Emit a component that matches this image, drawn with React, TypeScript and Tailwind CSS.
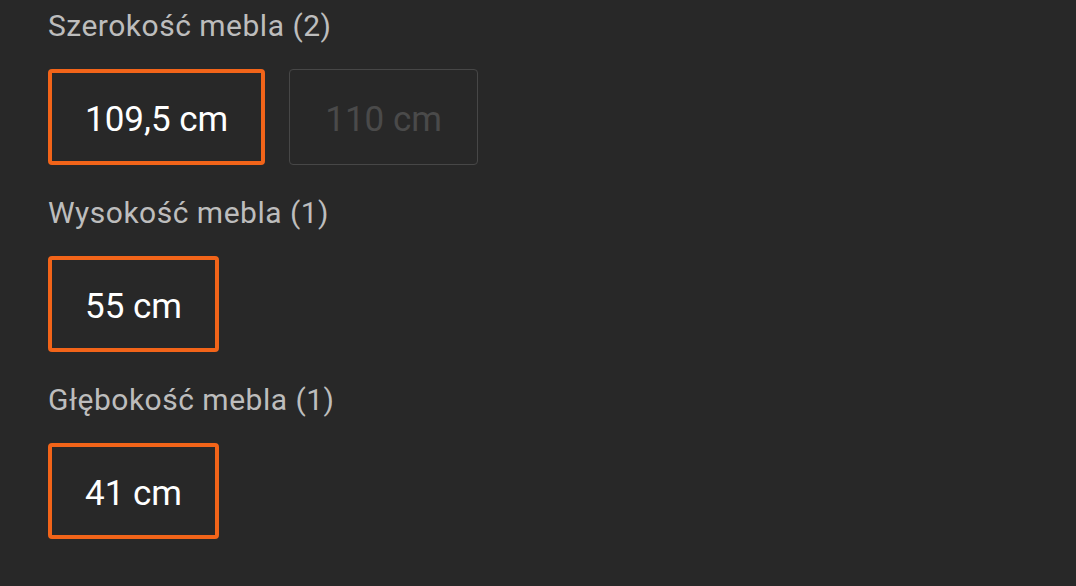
const groups = [
  { label: "Szerokość mebla (2)", options: [{ value: "109,5 cm", active: true }, { value: "110 cm", active: false }] },
  { label: "Wysokość mebla (1)", options: [{ value: "55 cm", active: true }] },
  { label: "Głębokość mebla (1)", options: [{ value: "41 cm", active: true }] },
];

function Option({ value, active }: { value: string; active: boolean }) {
  return (
    <button
      className={
        active
          ? "h-[96px] px-[33px] pt-[4px] rounded-[4px] border-[4px] border-[#f26419] text-white text-[35px] leading-none"
          : "h-[96px] px-[35px] pt-[4px] rounded-[4px] border-[1.5px] border-[#474747] text-[#4a4a4a] text-[35px] leading-none"
      }
    >
      {value}
    </button>
  );
}

export default function App() {
  return (
    <div
      className="w-[1076px] h-[586px] bg-[#282828] px-[48px] pt-[9px] flex flex-col gap-[31px]"
      style={{ fontFamily: "Roboto, 'Noto Sans', sans-serif" }}
    >
      {groups.map((g) => (
        <div key={g.label} className="flex flex-col gap-[27px]">
          <div className="text-[30px] leading-[33px] tracking-[0.5px] text-[#bdbdbd]">{g.label}</div>
          <div className="flex gap-[24px]">
            {g.options.map((o) => (
              <Option key={o.value} value={o.value} active={o.active} />
            ))}
          </div>
        </div>
      ))}
    </div>
  );
}
